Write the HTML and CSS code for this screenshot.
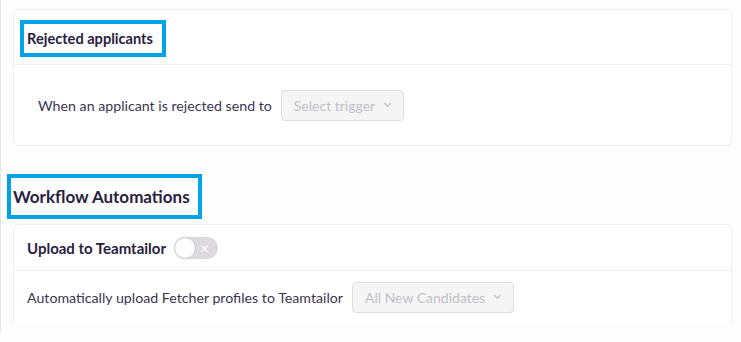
FILE: index.html
```html
<!DOCTYPE html>
<html lang="en">
<head>
    <meta charset="UTF-8">
    <meta name="viewport" content="width=device-width, initial-scale=1.0">
    <title>Automation settings</title>
    <link rel="stylesheet" href="styles.css">
</head>
<body>
    <div class="page">
        <section class="card">
            <div class="card-head">
                <span class="mark mark-card">Rejected applicants</span>
            </div>
            <div class="card-body">
                <span class="label">When an applicant is rejected send to</span>
                <button class="select" disabled>Select trigger <span class="chev"></span></button>
            </div>
        </section>

        <h2 class="section-title"><span class="mark mark-section">Workflow Automations</span></h2>

        <section class="card card-cut">
            <div class="card-head card-head-sm">
                <span class="card-title">Upload to Teamtailor</span>
                <span class="toggle">
                    <span class="knob"></span>
                    <span class="x">&times;</span>
                </span>
            </div>
            <div class="card-body card-body-sm">
                <span class="label">Automatically upload Fetcher profiles to Teamtailor</span>
                <button class="select" disabled>All New Candidates <span class="chev"></span></button>
            </div>
        </section>
    </div>
</body>
</html>
```
FILE: styles.css
```css
body {
    margin: 0;
    background-color: #fdfdfd;
    font-family: 'Lato', sans-serif;
    color: #3b3552;
}
.page {
    height: 332px;
    border-left: 1px solid #e6e6e6;
    padding: 9px 9px 0 12px;
    box-sizing: border-box;
    overflow: hidden;
}
.card {
    background-color: #fff;
    border: 1px solid #efefef;
    border-radius: 6px;
}
.card-head {
    padding: 10px 13px 7px 6px;
    border-bottom: 1px solid #efefef;
}
.mark {
    display: inline-block;
    border: 4px solid #00a2e8;
    font-weight: bold;
    color: #2a2140;
}
.mark-card {
    padding: 4px 9px 4px 3px;
    font-size: 14.6px;
    line-height: 21px;
}
.card-body {
    display: flex;
    align-items: center;
    height: 80px;
    padding: 0 24px;
    font-size: 14.2px;
}
.label {
    margin-right: 9px;
}
.select {
    display: inline-flex;
    align-items: center;
    height: 31px;
    padding: 0 11px 0 12px;
    border: 1px solid #dedde2;
    border-radius: 4px;
    background-color: #f5f5f6;
    color: #c2bfca;
    font-family: inherit;
    font-size: 14px;
}
.chev {
    width: 4px;
    height: 4px;
    margin: -3px 2px 0 10px;
    border-right: 1.3px solid #b5b2bd;
    border-bottom: 1.3px solid #b5b2bd;
    transform: rotate(45deg);
}
.section-title {
    margin: 28px 0 5px -6px;
    font-size: 17px;
}
.mark-section {
    padding: 7px 8px 7px 2px;
    line-height: 23px;
}
.card-cut {
    border-bottom: none;
    border-radius: 6px 6px 0 0;
    height: 98px;
}
.card-head-sm {
    display: flex;
    align-items: center;
    height: 46px;
    padding: 0 13px;
    box-sizing: border-box;
}
.card-title {
    font-size: 15px;
    font-weight: bold;
    color: #2a2140;
}
.toggle {
    position: relative;
    display: inline-block;
    width: 44px;
    height: 22px;
    margin-left: 8px;
    border-radius: 11px;
    background-color: #dcdae0;
}
.knob {
    position: absolute;
    top: 0;
    left: 0;
    width: 20px;
    height: 20px;
    border: 1px solid #c9c7ce;
    border-radius: 50%;
    background-color: #fff;
}
.x {
    position: absolute;
    right: 9px;
    top: 1px;
    color: #fff;
    font-size: 16px;
    line-height: 19px;
}
.card-body-sm {
    height: 52px;
    padding: 0 13px;
}
```
